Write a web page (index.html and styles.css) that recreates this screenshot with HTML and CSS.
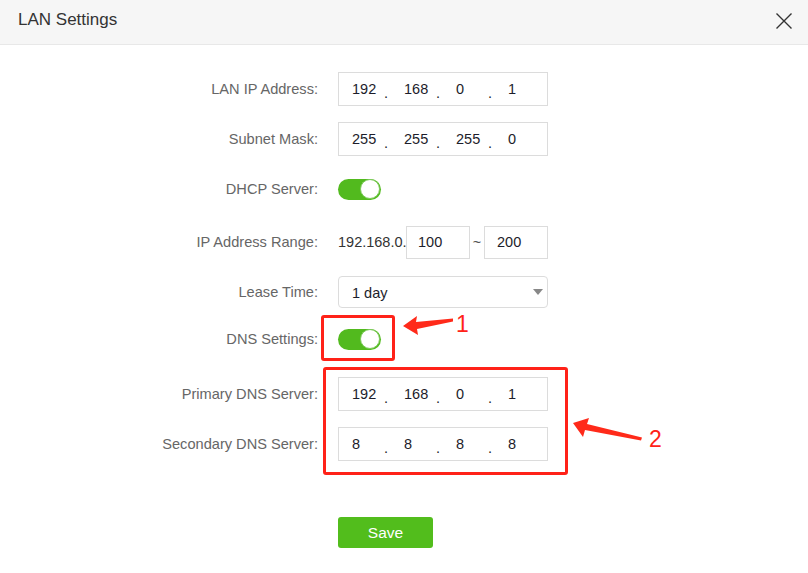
FILE: index.html
```html
<!DOCTYPE html>
<html lang="en">
<head>
<meta charset="utf-8">
<title>LAN Settings</title>
<link rel="stylesheet" href="styles.css">
</head>
<body>
<div class="dialog">
  <div class="header">
    <span class="title">LAN Settings</span>
    <svg class="close" width="18" height="18" viewBox="0 0 18 18"><path d="M1.5 1.5L16.5 16.5M16.5 1.5L1.5 16.5" stroke="#333" stroke-width="1.4" fill="none"/></svg>
  </div>
  <div class="form">
    <div class="row">
      <label class="lbl">LAN IP Address:</label>
      <div class="ipbox">
        <span class="seg">192</span><span class="dot">.</span>
        <span class="seg">168</span><span class="dot">.</span>
        <span class="seg">0</span><span class="dot">.</span>
        <span class="seg">1</span>
      </div>
    </div>
    <div class="row">
      <label class="lbl">Subnet Mask:</label>
      <div class="ipbox">
        <span class="seg">255</span><span class="dot">.</span>
        <span class="seg">255</span><span class="dot">.</span>
        <span class="seg">255</span><span class="dot">.</span>
        <span class="seg">0</span>
      </div>
    </div>
    <div class="row row-dhcp">
      <label class="lbl">DHCP Server:</label>
      <div class="toggle"><span class="knob"></span></div>
    </div>
    <div class="row">
      <label class="lbl">IP Address Range:</label>
      <div class="range">
        <span class="prefix">192.168.0.</span>
        <span class="small-box">100</span>
        <span class="tilde">~</span>
        <span class="small-box small-box2">200</span>
      </div>
    </div>
    <div class="row row-lease">
      <label class="lbl">Lease Time:</label>
      <div class="select">
        <span>1 day</span>
        <span class="caret"></span>
      </div>
    </div>
    <div class="row row-dns">
      <label class="lbl">DNS Settings:</label>
      <div class="toggle"><span class="knob"></span></div>
    </div>
    <div class="row">
      <label class="lbl">Primary DNS Server:</label>
      <div class="ipbox">
        <span class="seg">192</span><span class="dot">.</span>
        <span class="seg">168</span><span class="dot">.</span>
        <span class="seg">0</span><span class="dot">.</span>
        <span class="seg">1</span>
      </div>
    </div>
    <div class="row">
      <label class="lbl">Secondary DNS Server:</label>
      <div class="ipbox">
        <span class="seg">8</span><span class="dot">.</span>
        <span class="seg">8</span><span class="dot">.</span>
        <span class="seg">8</span><span class="dot">.</span>
        <span class="seg">8</span>
      </div>
    </div>
    <div class="row row-save">
      <span class="lbl"></span>
      <button class="save">Save</button>
    </div>
  </div>

  <div class="mark mark1"></div>
  <div class="mark mark2"></div>
  <svg class="arrows" width="808" height="573" viewBox="0 0 808 573">
    <polygon points="403,326 417,316 416,322 453,318.5 453,321.5 417,329 418,335" fill="#ff2a1a"/>
    <polygon points="573,423 589,418 587,424 642,437.5 641,440.5 585,430 583,437" fill="#ff2a1a"/>
  </svg>
  <span class="num num1">1</span>
  <span class="num num2">2</span>
</div>
</body>
</html>
```

FILE: styles.css
```css
* { box-sizing: border-box; }
html, body { margin: 0; padding: 0; background: #fff; }
body {
  font-family: "Liberation Sans", Arial, sans-serif;
  font-size: 14px;
  color: #333;
}
.dialog {
  position: relative;
  width: 808px;
  height: 573px;
  overflow: hidden;
}
.header {
  height: 45px;
  background: #f6f6f6;
  border-bottom: 1px solid #e8e8e8;
  display: flex;
  align-items: center;
  justify-content: space-between;
  padding: 0 15px 4px 18px;
}
.title {
  font-size: 17px;
  color: #333;
}
.close { display: block; margin-top: 2px; }
.form {
  display: flex;
  flex-direction: column;
  padding-top: 27px;
}
.row {
  display: grid;
  grid-template-columns: 318px 210px;
  column-gap: 20px;
  align-items: center;
  height: 34px;
  margin-bottom: 16px;
}
.row-dhcp { margin-bottom: 19px; }
.row-lease { margin-bottom: 13px; }
.row-dns { margin-bottom: 21px; }
.row-dns + .row + .row { margin-bottom: 56px; }
.lbl {
  text-align: right;
  color: #666;
  font-size: 14.6px;
}
.ipbox {
  height: 34px;
  border: 1px solid #dcdcdc;
  display: flex;
  align-items: center;
  padding-left: 13px;
  color: #1d1d2b;
  font-size: 14.5px;
}
.seg { width: 32px; }
.dot { width: 20px; padding-top: 8px; }
.toggle {
  width: 43px;
  height: 21px;
  border-radius: 11px;
  background: #52ba1e;
  position: relative;
}
.knob {
  position: absolute;
  right: 1px;
  top: 0.5px;
  width: 20px;
  height: 20px;
  border-radius: 50%;
  background: #fff;
  border: 1px solid #7cc95a;
}
.range {
  display: flex;
  align-items: center;
  width: 230px;
  color: #1d1d2b;
  font-size: 14.5px;
}
.prefix { width: 68px; color: #333; }
.small-box {
  width: 64px;
  height: 33px;
  border: 1px solid #dcdcdc;
  display: flex;
  align-items: center;
  padding-left: 11px;
}
.tilde { width: 14px; text-align: center; color: #555; }
.small-box2 { padding-left: 12px; }
.select {
  height: 32px;
  border: 1px solid #dcdcdc;
  border-radius: 4px;
  display: flex;
  align-items: center;
  justify-content: space-between;
  padding: 2px 4px 0 13px;
  color: #1d1d2b;
  font-size: 14.5px;
}
.caret {
  width: 0; height: 0;
  border-left: 5px solid transparent;
  border-right: 5px solid transparent;
  border-top: 6px solid #888;
  margin-top: -2px;
}
.row-save { height: 31px; }
.save {
  width: 95px;
  height: 31px;
  background: #52bd1c;
  color: #fff;
  border: none;
  border-radius: 3px;
  font-family: "Liberation Sans", Arial, sans-serif;
  font-size: 15.5px;
  padding: 0;
  justify-self: start;
}
.mark {
  position: absolute;
  border: 3px solid #ff2218;
  border-radius: 3px;
}
.mark1 { left: 321px; top: 315px; width: 74px; height: 46px; }
.mark2 { left: 323px; top: 367px; width: 245px; height: 108px; }
.arrows { position: absolute; left: 0; top: 0; pointer-events: none; }
.num {
  position: absolute;
  color: #ff2218;
  font-size: 23px;
  line-height: 1;
}
.num1 { left: 456px; top: 313px; }
.num2 { left: 649px; top: 428px; }
```
